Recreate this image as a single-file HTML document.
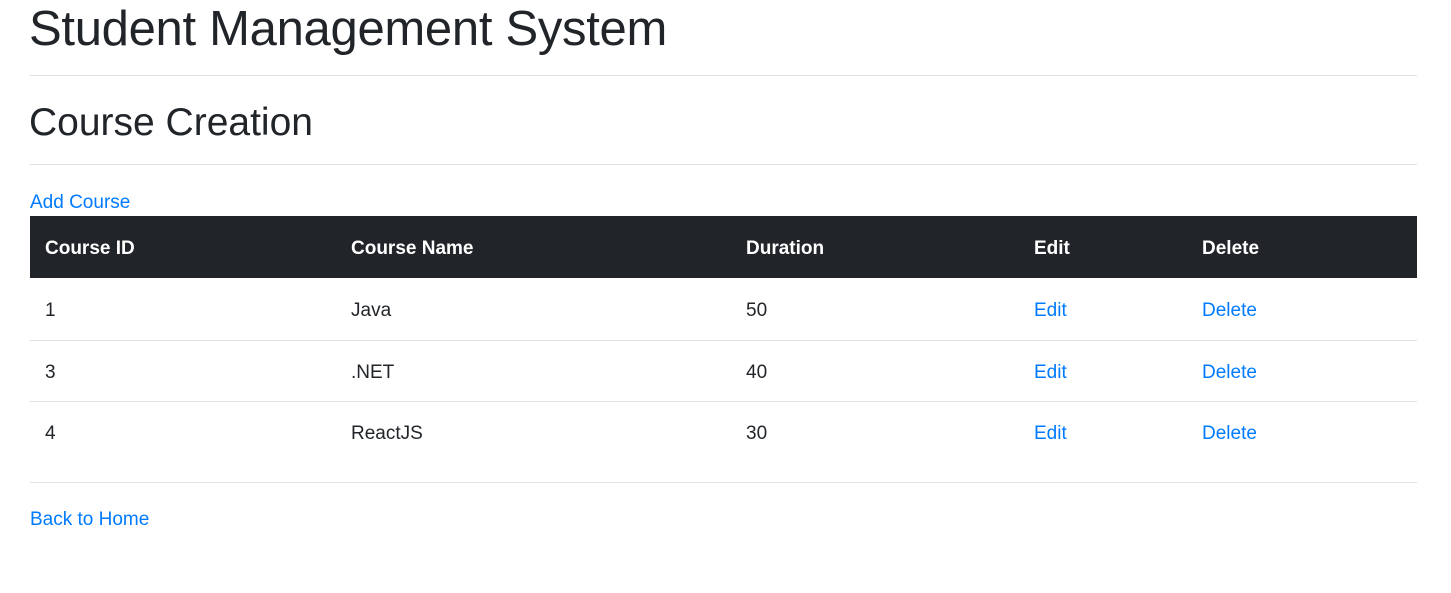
<!DOCTYPE html>
<html><head><style>
body{margin:0;background:#fff;font-family:"Liberation Sans",sans-serif;color:#212529;width:1451px;height:593px;overflow:hidden;position:relative}
.a{position:absolute;white-space:nowrap}
.hr{position:absolute;left:30px;width:1387px;height:1px;background:#e2e2e2}
a{color:#007bff;text-decoration:none}
.t{font-size:19px;line-height:24px}
.h{color:#fff;font-weight:bold;font-size:19px;line-height:24px}
</style></head><body>
<div class="a" style="left:29px;top:-1px;font-size:49px;line-height:60px;letter-spacing:-0.3px">Student Management System</div>
<div class="hr" style="top:75px"></div>
<div class="a" style="left:29px;top:99px;font-size:39px;line-height:48px">Course Creation</div>
<div class="hr" style="top:164px"></div>
<div class="a t" style="left:30px;top:191px"><a href="#">Add Course</a></div>
<div style="position:absolute;left:30px;top:216px;width:1387px;height:62px;background:#212529"></div>
<div class="a h" style="left:45px;top:237px">Course ID</div>
<div class="a h" style="left:351px;top:237px">Course Name</div>
<div class="a h" style="left:746px;top:237px">Duration</div>
<div class="a h" style="left:1034px;top:237px">Edit</div>
<div class="a h" style="left:1202px;top:237px">Delete</div>
<div class="hr" style="top:340px;background:#dee2e6"></div>
<div class="hr" style="top:401px;background:#dee2e6"></div>
<div class="a t" style="left:45px;top:299px">1</div><div class="a t" style="left:351px;top:299px">Java</div><div class="a t" style="left:746px;top:299px">50</div><div class="a t" style="left:1034px;top:299px"><a href="#">Edit</a></div><div class="a t" style="left:1202px;top:299px"><a href="#">Delete</a></div>
<div class="a t" style="left:45px;top:361px">3</div><div class="a t" style="left:351px;top:361px">.NET</div><div class="a t" style="left:746px;top:361px">40</div><div class="a t" style="left:1034px;top:361px"><a href="#">Edit</a></div><div class="a t" style="left:1202px;top:361px"><a href="#">Delete</a></div>
<div class="a t" style="left:45px;top:422px">4</div><div class="a t" style="left:351px;top:422px">ReactJS</div><div class="a t" style="left:746px;top:422px">30</div><div class="a t" style="left:1034px;top:422px"><a href="#">Edit</a></div><div class="a t" style="left:1202px;top:422px"><a href="#">Delete</a></div>
<div class="hr" style="top:482px"></div>
<div class="a t" style="left:30px;top:508px"><a href="#">Back to Home</a></div>
</body></html>
